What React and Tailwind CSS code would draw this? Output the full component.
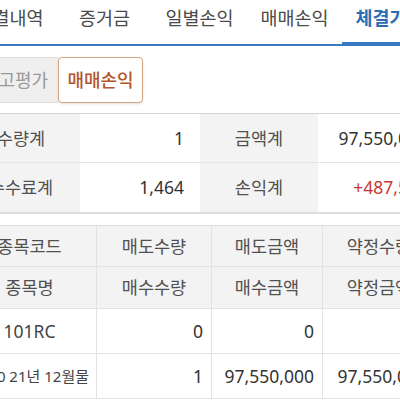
import React from 'react';

const tabs = ['체결내역', '증거금', '일별손익', '매매손익', '체결가능'];

function Tabs() {
  return (
    <div className="flex -ml-[38px] border-b-2 border-[#3a78c2]">
      {tabs.map((t, i) => {
        const active = i === 4;
        return (
          <div
            key={t}
            className={
              active
                ? 'w-[95px] shrink-0 h-[44px] pb-[7px] flex items-center justify-center whitespace-nowrap text-[18.5px] font-bold text-[#2c6cb5] border-b-2 border-[#3a78c2]'
                : 'w-[95px] shrink-0 h-[44px] pb-[9px] flex items-center justify-center whitespace-nowrap text-[18.5px] text-[#4a4a4a]'
            }
          >
            {t}
          </div>
        );
      })}
    </div>
  );
}

function Segment() {
  return (
    <div className="mt-[11px] flex h-[46px] -ml-[29px]">
      <div className="w-[87px] shrink-0 bg-[#efefef] border border-r-0 border-[#dedede] rounded-l-[4px] flex items-center justify-center text-[18px] text-[#9a9a9a] whitespace-nowrap">
        잔고평가
      </div>
      <div className="w-[85px] shrink-0 bg-white border border-[#d6a47f] rounded-[4px] flex items-center justify-center text-[18px] font-medium text-[#b2562a] whitespace-nowrap shadow-sm">
        매매손익
      </div>
    </div>
  );
}

function SumRow({ l1, v1, l2, v2, red, last }) {
  return (
    <div className={`flex -ml-[38px] h-[49px] ${last ? '' : 'border-b border-[#e4e4e4]'}`}>
      <div className="w-[118px] shrink-0 bg-[#f3f3f3] flex items-center justify-center text-[17.5px] text-[#505050]">{l1}</div>
      <div className="w-[120px] shrink-0 flex items-center justify-end pr-[16px] text-[17.5px] text-[#333]">{v1}</div>
      <div className="w-[118px] shrink-0 bg-[#f3f3f3] flex items-center justify-center text-[17.5px] text-[#505050]">{l2}</div>
      <div className={`w-[125px] shrink-0 flex items-center justify-end pr-[15px] text-[17.5px] whitespace-nowrap ${red ? 'text-[#c83a32]' : 'text-[#333]'}`}>{v2}</div>
    </div>
  );
}

const widths = ['w-[134px]', 'w-[115px]', 'w-[111px]', 'w-[113px]'];

function HeadRow({ cells, h }) {
  return (
    <div className={`flex -ml-[37px] bg-[#f3f3f3] border-b border-[#e2e2e2] ${h}`}>
      {cells.map((c, i) => (
        <div key={i} className={`${widths[i]} shrink-0 border-r border-[#e2e2e2] flex items-center justify-center text-[17.5px] text-[#505050] whitespace-nowrap`}>
          {c}
        </div>
      ))}
    </div>
  );
}

function DataRow({ first, cells, small }) {
  return (
    <div className="flex -ml-[37px] h-[45px] border-b border-[#e2e2e2]">
      <div
        className={
          small
            ? 'w-[134px] shrink-0 border-r border-[#e2e2e2] flex items-center justify-end pr-[7px] text-[15px] text-[#444] whitespace-nowrap overflow-hidden'
            : 'w-[134px] shrink-0 border-r border-[#e2e2e2] flex items-center justify-center text-[17.5px] text-[#444] whitespace-nowrap'
        }
      >
        {first}
      </div>
      {cells.map((c, i) => (
        <div key={i} className={`${widths[i + 1]} shrink-0 border-r border-[#e2e2e2] flex items-center justify-end pr-[8px] text-[17.5px] text-[#333] whitespace-nowrap`}>
          {c}
        </div>
      ))}
    </div>
  );
}

export default function App() {
  return (
    <div className="w-[400px] h-[400px] overflow-hidden bg-white" style={{ fontFamily: '"Noto Sans", "Noto Sans CJK KR", sans-serif' }}>
      <Tabs />
      <Segment />

      <div className="mt-[10px] border-t border-[#d4d4d4] border-b-2 border-b-[#dedede]">
        <SumRow l1="수량계" v1="1" l2="금액계" v2="97,550,000" />
        <SumRow l1="수수료계" v1="1,464" l2="손익계" v2="+487,500" red last />
      </div>

      <div className="mt-[11px] border-t border-[#dcdcdc]">
        <HeadRow h="h-[41px]" cells={['종목코드', '매도수량', '매도금액', '약정수량']} />
        <HeadRow h="h-[42px]" cells={['종목명', '매수수량', '매수금액', '약정금액']} />
        <DataRow first="101RC" cells={['0', '0', '']} />
        <DataRow first="코스피200 21년 12월물" small cells={['1', '97,550,000', '97,550,000']} />
      </div>
    </div>
  );
}
